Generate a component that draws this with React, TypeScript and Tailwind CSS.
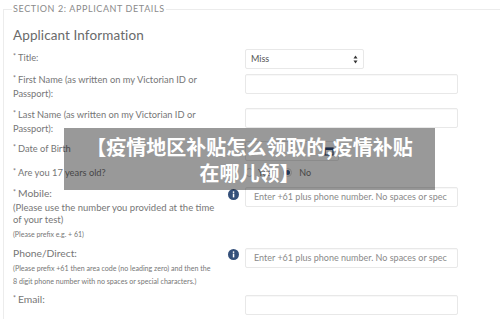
import React from "react";

function Info() {
  return (
    <svg width="11" height="11" viewBox="0 0 11 11" className="shrink-0">
      <circle cx="5.5" cy="5.5" r="5.5" fill="#34507a" />
      <rect x="4.8" y="4.6" width="1.5" height="3.8" fill="#fff" />
      <circle cx="5.55" cy="3.1" r="0.85" fill="#fff" />
    </svg>
  );
}

function Input({ placeholder }: { placeholder?: string }) {
  return (
    <div className="w-[213px] h-[20px] border border-[#e8e8e8] rounded-[2px] bg-white flex items-center pl-[8px] pr-[10px] text-[9px] text-[#8a8a8a] shadow-[inset_0_1px_1px_rgba(0,0,0,0.03)]">
      <span className="block overflow-hidden whitespace-nowrap">{placeholder}</span>
    </div>
  );
}

const Star = () => <span className="text-[7px] relative -top-[2px] mr-[2px]">*</span>;

export default function App() {
  return (
    <div
      className="relative w-[500px] h-[319px] overflow-hidden bg-white text-[#767676]"
      style={{ fontFamily: "Lato, 'Open Sans', sans-serif" }}
    >
      <fieldset className="mt-[4px] ml-[3px] border-t border-l border-[#ececec] pl-[9px] min-w-0">
        <legend className="text-[9px] leading-[10px] tracking-[0.6px] text-[#8a8a8a] px-[1px] -ml-[1px]">
          SECTION 2: APPLICANT DETAILS
        </legend>
        <div className="mt-[11px] text-[13.5px] leading-[20px] text-[#6a6a6a] tracking-[0.1px]">Applicant Information</div>

        {/* Title */}
        <div className="mt-[4px] h-[23px] flex">
          <div className="w-[232px] pt-[1.5px] text-[9.3px] leading-[13px]"><Star />Title:</div>
          <div className="w-[119px] h-[20px] border border-[#e8e8e8] rounded-[2px] flex items-center justify-between pl-[5px] pr-[5px] text-[9px] text-[#555]">
            <span>Miss</span>
            <svg width="5" height="9" viewBox="0 0 5 9">
              <path d="M2.5 0.5 L4.5 3.5 L0.5 3.5 Z" fill="#333" />
              <path d="M2.5 8.5 L4.5 5.5 L0.5 5.5 Z" fill="#333" />
            </svg>
          </div>
        </div>

        {/* First name */}
        <div className="h-[35px] flex">
          <div className="w-[232px] pt-[0.5px] text-[9.3px] leading-[13px]">
            <Star />First Name (as written on my Victorian ID or
            <br />Passport):
          </div>
          <div className="pt-[2px]"><Input /></div>
        </div>

        {/* Last name */}
        <div className="h-[34px] flex">
          <div className="w-[232px] pt-[0.5px] text-[9.3px] leading-[13px]">
            <Star />Last Name (as written on my Victorian ID or
            <br />Passport):
          </div>
          <div className="pt-[1px]"><Input /></div>
        </div>

        {/* DOB */}
        <div className="h-[24px] flex">
          <div className="w-[232px] pt-[0.5px] text-[9.3px] leading-[13px]"><Star />Date of Birth</div>
          <div className="w-[94px] h-[20px] border border-[#e8e8e8] rounded-[2px] flex items-center justify-end pr-[4px]">
            <svg width="10" height="10" viewBox="0 0 10 10">
              <rect x="1" y="2" width="8" height="7" fill="none" stroke="#2f4a73" strokeWidth="1.2" />
              <rect x="1" y="2" width="8" height="2" fill="#2f4a73" />
            </svg>
          </div>
        </div>

        {/* 17 */}
        <div className="h-[21px] flex">
          <div className="w-[232px] pt-[0.5px] text-[9.3px] leading-[13px]"><Star />Are you 17 years old?</div>
          <div className="flex items-center h-[15px] text-[9px] gap-[4px]">
            <span className="w-[9px] h-[9px] rounded-full border border-[#ccc]" />
            <span className="mr-[8px]">Yes</span>
            <span className="w-[9px] h-[9px] rounded-full border border-[#d5d5d5] flex items-center justify-center">
              <span className="w-[5px] h-[5px] rounded-full bg-[#2f5f9a]" />
            </span>
            <span className="ml-[3px]">No</span>
          </div>
        </div>

        {/* Mobile */}
        <div className="h-[61px] flex">
          <div className="w-[232px] flex">
            <div className="w-[215px]">
              <div className="pt-[0.5px] text-[10.3px] leading-[13px]"><Star />Mobile:</div>
              <div className="mt-[1.5px] text-[9.5px] leading-[12px]">
                (Please use the number you provided at the time
                <br />of your test)
              </div>
              <div className="mt-[2px] text-[7px] leading-[12px]">(Please prefix e.g. + 61)</div>
            </div>
            <div className="pt-[3px]"><Info /></div>
          </div>
          <div className="pt-[1px]"><Input placeholder="Enter +61 plus phone number. No spaces or special characters" /></div>
        </div>

        {/* Phone */}
        <div className="h-[46px] flex">
          <div className="w-[232px] flex">
            <div className="w-[215px]">
              <div className="text-[10.3px] leading-[13px]">Phone/Direct:</div>
              <div className="mt-[2px] text-[7.1px] leading-[13px] whitespace-nowrap">
                (Please prefix +61 then area code (no leading zero) and then the
                <br />8 digit phone number with no spaces or special characters.)
              </div>
            </div>
            <div className="pt-[2px]"><Info /></div>
          </div>
          <div className="pt-[1px]"><Input placeholder="Enter +61 plus phone number. No spaces or special characters" /></div>
        </div>

        {/* Email */}
        <div className="h-[30px] flex">
          <div className="w-[232px] text-[10.3px] leading-[13px]"><Star />Email:</div>
          <div className="pt-[2px]"><Input /></div>
        </div>
      </fieldset>

      <div
        className="absolute left-[64px] top-[128px] w-[371px] h-[62px] bg-black/40 pt-[6px] text-center text-white font-bold text-[20px] leading-[26px]"
        style={{ fontFamily: "'Noto Sans CJK SC', 'Noto Sans', sans-serif" }}
      >
        【疫情地区补贴怎么领取的,疫情补贴
        <br />在哪儿领】
      </div>
    </div>
  );
}
